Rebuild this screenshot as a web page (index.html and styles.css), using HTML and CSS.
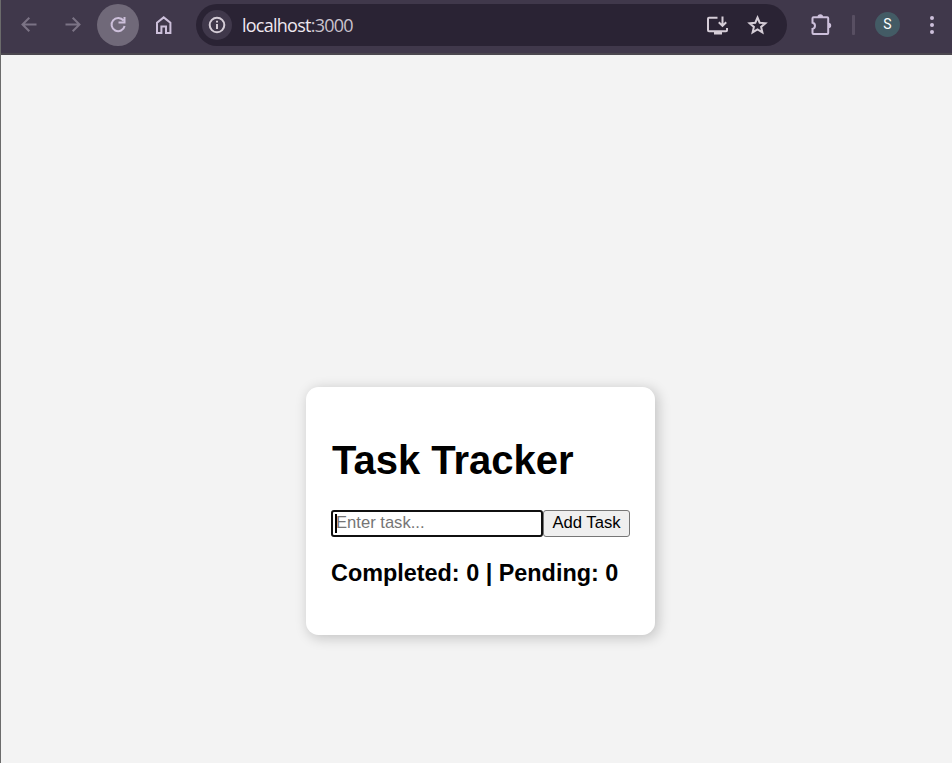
FILE: index.html
```html
<!DOCTYPE html>
<html lang="en">
<head>
<meta charset="utf-8">
<title>Task Tracker</title>
<link rel="stylesheet" href="styles.css">
</head>
<body>
<div class="window">
  <header class="toolbar">
    <svg class="icon back dim" viewBox="0 0 22 22"><path d="M18.500 10.500H4.500M11.300 3.700l-6.800 6.800 6.800 6.800"/></svg>
    <svg class="icon forward dim" viewBox="0 0 22 22"><path d="M3.500 10.500H17.500M10.700 3.700l6.800 6.800-6.800 6.800"/></svg>
    <span class="reload"><svg class="icon" viewBox="0 0 22 22"><path d="M16.500 6.700A6.600 6.600 0 1 0 17.600 12M17.500 3v5.500H11.500"/></svg></span>
    <svg class="icon home" viewBox="0 0 22 22"><path d="M4 19V8.700L10.700 3.400 17.400 8.700V19h-4.400v-6.500H8.400V19z"/></svg>
    <div class="address">
      <span class="info"><svg class="icon" viewBox="0 0 22 22"><circle cx="11" cy="11" r="7.300"/><path d="M11 10v5M11 6.800v1.800"/></svg></span>
      <span class="url">localhost<span class="port">:3000</span></span>
      <svg class="icon install" viewBox="0 0 22 22"><path d="M11.500 3.700H3q-1 0-1 1v11.600q0 1 1 1h17q1 0 1-1V14M16.500 2.500v9M12.800 8.200l3.700 3.700 3.700-3.700"/><path class="solid" d="M8 17h8v3.500H8z"/></svg>
      <svg class="icon star" viewBox="0 0 22 22"><path d="M10.500 3.500l2.200 5.200 5.700.5-4.300 3.700 1.300 5.500-4.900-2.900-4.900 2.900 1.300-5.500-4.300-3.700 5.700-.5z"/></svg>
    </div>
    <svg class="icon extensions" viewBox="0 0 22 22"><path d="M3.500 3.200h13.700q1 0 1 1v14.800q0 1-1 1H3.500q-1 0-1-1V14.900q2.500-.5 2.500-3.100T2.500 8.700V4.200q0-1 1-1z"/><path class="solid" d="M7.500 3a2.800 2.800 0 0 1 5.600 0zM18.500 8.700a2.700 2.700 0 0 1 0 5.400z"/></svg>
    <span class="divider"></span>
    <span class="avatar">S</span>
    <svg class="more" viewBox="0 0 6 20"><circle cx="3" cy="3" r="2"/><circle cx="3" cy="10" r="2"/><circle cx="3" cy="17" r="2"/></svg>
  </header>
  <main class="page">
    <section class="card">
      <h1>Task Tracker</h1>
      <div class="entry">
        <div class="field"><input type="text" placeholder="Enter task..."><span class="caret"></span></div>
        <button type="button">Add Task</button>
      </div>
      <h3>Completed: 0 | Pending: 0</h3>
    </section>
  </main>
</div>
</body>
</html>
```
FILE: styles.css
```css
* { box-sizing: border-box; }
body { margin: 0; font-family: "Liberation Sans", Arial, sans-serif; color: #000; }
.window { height: 763px; display: flex; flex-direction: column; border-left: 1px solid #6b6b6b; overflow: hidden; }
.toolbar { flex: none; height: 55px; padding: 0 0 3px 17px; display: flex; align-items: center; background: #40384b; border-bottom: 2px solid #4b474f; }
.icon { flex: none; width: 22px; height: 22px; fill: none; stroke: #cdc0db; stroke-width: 2; }
.icon .solid { fill: currentColor; stroke: none; }
.dim { stroke: #7b7385; }
.forward { margin-left: 22px; }
.reload { flex: none; width: 42px; height: 42px; margin-left: 13px; border-radius: 50%; background: #706979; display: flex; align-items: center; justify-content: center; }
.home { margin-left: 14px; }
.address { flex: none; width: 591px; height: 42px; margin-left: 21px; padding: 0 18px 0 6px; border-radius: 21px; background: #2a2334; display: flex; align-items: center; color: #d5cdd7; }
.address .icon { stroke: #d5cdd7; }
.info { width: 30px; height: 30px; border-radius: 50%; background: #40384b; display: flex; align-items: center; justify-content: center; }
.url { margin-left: 10px; font: 18px/24px "Open Sans", "Noto Sans", sans-serif; letter-spacing: -0.750px; color: #eee8f0; }
.port { color: #c9c2cd; }
.install { margin-left: auto; }
.star { margin-left: 19px; }
.extensions { margin-left: 23px; color: #cdc0db; }
.divider { width: 3px; height: 20px; margin-left: 20px; border-radius: 1px; background: #584f62; }
.avatar { flex: none; width: 25px; height: 25px; margin: 0 0 1px 20px; border-radius: 50%; background: #435b65; color: #fff; font: 400 14px/25px Roboto, sans-serif; text-align: center; }
.more { width: 6px; height: 20px; margin-left: 29px; fill: #cdc0db; }
.page { flex: 1; padding: 332px 0 0 305px; background: #f3f3f3; }
.card { width: 349px; height: 248px; padding: 50px 25px 0; background: #fff; border-radius: 12.500px; box-shadow: 2.500px 2.500px 12.500px rgba(0, 0, 0, .2); }
h1 { margin: 0 0 0 1px; font-size: 40px; line-height: 46px; white-space: nowrap; }
.entry { display: flex; margin-top: 27px; }
.field { position: relative; width: 212px; }
input { display: block; width: 212px; height: 27px; padding: 0 3px 2px; border: 2px solid #101010; border-radius: 3px; outline: 0; font: 16.600px "Liberation Sans", Arial, sans-serif; }
input::placeholder { color: #757575; }
.caret { position: absolute; left: 4px; top: 4px; width: 2px; height: 19px; background: #000; }
button { width: 87px; height: 27px; padding: 0 0 2px; border: 1px solid #767676; border-radius: 3px; background: #efefef; color: #000; font: 16.667px "Liberation Sans", Arial, sans-serif; }
h3 { margin: 23px 0 0; font-size: 23.400px; line-height: 26px; white-space: nowrap; }
```
